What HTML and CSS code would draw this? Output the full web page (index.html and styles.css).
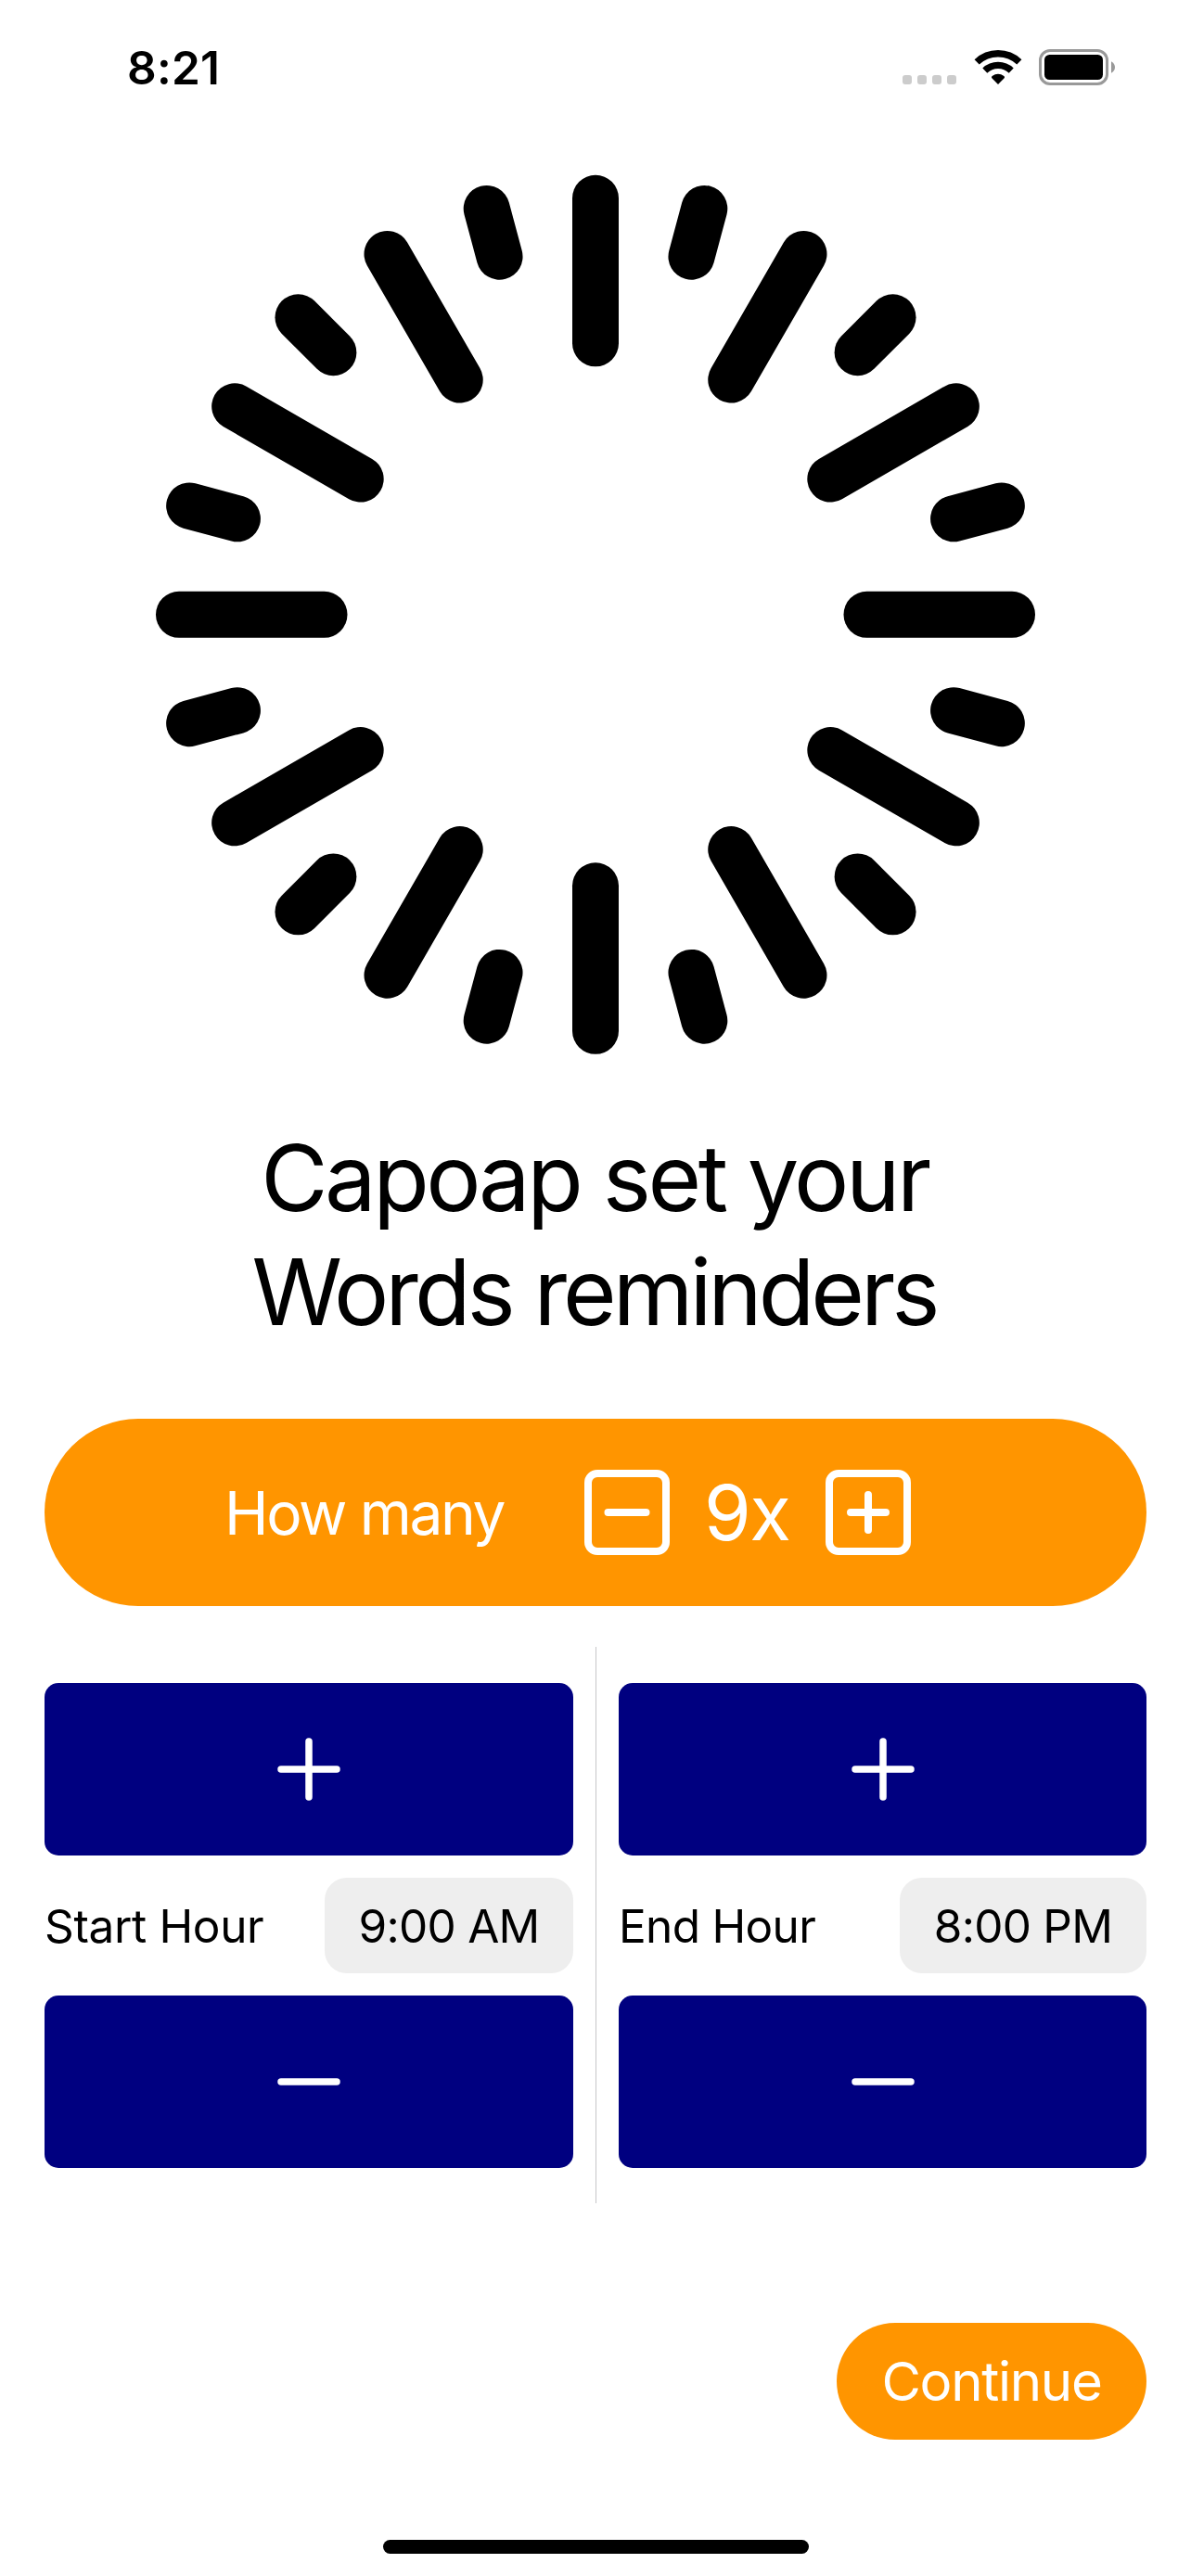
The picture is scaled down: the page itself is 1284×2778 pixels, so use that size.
FILE: index.html
```
<!DOCTYPE html>
<html lang="en">
<head>
<meta charset="utf-8">
<title>Words reminders</title>
<link rel="stylesheet" href="styles.css">
</head>
<body>
<div class="screen">
  <header class="status">
    <span class="time">8:21</span>
    <div class="indicators">
      <div class="signal"><i></i><i></i><i></i><i></i></div>
      <svg class="wifi" width="52" height="39" viewBox="-26 -38 52 39">
        <path d="M-22.85-24.1A33.2 33.2 0 0 1 22.85-24.1" fill="none" stroke="#000" stroke-width="7.5"/>
        <path d="M-14.2-14.9A20.6 20.6 0 0 1 14.2-14.9" fill="none" stroke="#000" stroke-width="7.3"/>
        <path d="M0 0L-6.9-7Q-7.4-8.2-6.4-9A11.3 11.3 0 0 1 6.4-9Q7.4-8.2 6.9-7Z"/>
      </svg>
      <svg class="battery" width="83" height="39" viewBox="0 0 83 39">
        <rect x="1.5" y="1.5" width="72" height="36" rx="10.5" fill="none" stroke="#999" stroke-width="3"/>
        <rect x="6" y="6" width="63" height="27" rx="5.5"/>
        <path d="M78 13.2Q82 15.5 82 19.5T78 25.8Z" fill="#999"/>
      </svg>
    </div>
  </header>

  <svg class="dial" width="950" height="950" viewBox="-475 -474.8 950 950">
    <defs>
      <g id="rays">
        <path d="M0-449V-292.5"/>
        <path d="M0-453.3V-399.7" transform="rotate(15)"/>
      </g>
      <g id="quarter">
        <use href="#rays"/>
        <use href="#rays" transform="rotate(30)"/>
        <use href="#rays" transform="rotate(60)"/>
      </g>
    </defs>
    <use href="#quarter"/>
    <use href="#quarter" transform="rotate(90)"/>
    <use href="#quarter" transform="rotate(180)"/>
    <use href="#quarter" transform="rotate(270)"/>
  </svg>

  <h1 class="title"><span class="line first">Capoap set your</span><span class="line second">Words reminders</span></h1>

  <section class="count">
    <span class="count-label">How many</span>
    <svg class="step" width="92" height="92" viewBox="0 0 92 92">
      <rect x="4" y="4" width="84" height="84" rx="10"/>
      <path d="M25.5 46H66.5"/>
    </svg>
    <span class="count-value">9x</span>
    <svg class="step" width="92" height="92" viewBox="0 0 92 92">
      <rect x="4" y="4" width="84" height="84" rx="10"/>
      <path d="M27 46H65M46 27V65"/>
    </svg>
  </section>

  <section class="hours">
    <div class="hour">
      <div class="adjust"><svg width="76" height="76" viewBox="-38 -38 76 76"><path d="M-30 0H30M0-30V30"/></svg></div>
      <div class="row"><span class="start-label">Start Hour</span><span class="chip start">9:00 AM</span></div>
      <div class="adjust"><svg width="76" height="76" viewBox="-38 -38 76 76"><path d="M-30 0H30"/></svg></div>
    </div>
    <div class="divider"></div>
    <div class="hour">
      <div class="adjust"><svg width="76" height="76" viewBox="-38 -38 76 76"><path d="M-30 0H30M0-30V30"/></svg></div>
      <div class="row"><span class="end-label">End Hour</span><span class="chip end">8:00 PM</span></div>
      <div class="adjust"><svg width="76" height="76" viewBox="-38 -38 76 76"><path d="M-30 0H30"/></svg></div>
    </div>
  </section>

  <div class="continue">Continue</div>
  <div class="home"></div>
</div>
</body>
</html>
```
FILE: styles.css
```
* { box-sizing: border-box; }
body { margin: 0; background: #fff; color: #000; font-family: Inter, "Liberation Sans", sans-serif; }
svg { display: block; flex: none; }
.screen { width: 1284px; height: 2778px; display: flex; flex-direction: column; overflow: hidden; white-space: nowrap; }

.status { height: 146px; padding: 0 81px 1px 137px; display: flex; align-items: center; justify-content: space-between; }
.time { font-size: 49.5px; font-weight: 600; letter-spacing: 0.23px; }
.indicators { display: flex; align-items: center; }
.signal { display: flex; gap: 6px; height: 39px; align-items: flex-end; padding-bottom: 1px; }
.signal i { width: 10px; height: 10px; border-radius: 3px; background: #ccc; }
.wifi { margin-left: 19px; }
.battery { margin-left: 18px; }

.dial { margin: 42px auto 0; fill: none; stroke: #000; stroke-width: 50; stroke-linecap: round; }

.title { margin: 70.5px 0 0; font-size: 99px; font-weight: 400; line-height: 123px; text-align: center; }
.line { display: block; }
.first { letter-spacing: -3.5px; padding-right: 2px; }
.second { letter-spacing: -4.05px; padding-right: 3px; }

.count { margin: 75.5px 48px 0; height: 202px; flex: none; border-radius: 101px; background: #ff9500; color: #fff; display: flex; align-items: center; padding-left: 194px; }
.count-label { width: 388px; font-size: 64px; letter-spacing: -2.35px; }
.count-value { width: 168px; padding-left: 37px; font-size: 82px; letter-spacing: -1.5px; }
.step { fill: none; stroke: #fff; stroke-width: 8; stroke-linecap: round; }

.hours { margin: 44px 48px 0; height: 600px; flex: none; display: grid; grid-template-columns: 570px 1px 569px; column-gap: 24px; }
.hour { padding-top: 39px; display: flex; flex-direction: column; gap: 24px; }
.divider { background: #c6c6c8; }
.adjust { height: 186px; border-radius: 15px; background: #000080; display: flex; align-items: center; justify-content: center; }
.adjust svg { fill: none; stroke: #fff; stroke-width: 7.5; stroke-linecap: round; }
.row { height: 103px; display: flex; align-items: center; justify-content: space-between; font-size: 49.5px; }
.start-label { letter-spacing: -0.35px; }
.end-label { letter-spacing: -0.68px; }
.chip { height: 103px; border-radius: 24px; background: #eee; display: flex; align-items: center; justify-content: center; letter-spacing: -0.73px; }
.start { width: 268px; }
.end { width: 266px; }

.continue { margin: 129px 48px 0 auto; width: 334px; height: 126px; flex: none; border-radius: 63px; background: #ff9500; color: #fff; display: flex; align-items: center; justify-content: center; font-size: 58.2px; letter-spacing: -1.3px; }
.home { margin: 108px 0 0 413px; width: 459px; height: 15px; flex: none; border-radius: 7.5px; background: #000; }
```
